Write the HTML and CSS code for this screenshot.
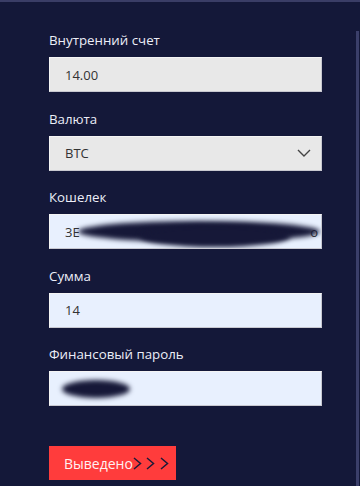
FILE: index.html
```html
<!DOCTYPE html>
<html lang="ru">
<head>
<meta charset="utf-8">
<link rel="stylesheet" href="styles.css">
</head>
<body>
<div class="panel">
  <div class="scrollbar"></div>
  <form class="form">
    <div class="field">
      <div class="label">Внутренний счет</div>
      <div class="input grey">14.00</div>
    </div>
    <div class="field">
      <div class="label">Валюта</div>
      <div class="input grey select">
        <span>BTC</span>
        <svg class="chev" width="14" height="8" viewBox="0 0 14 8"><path d="M1 1 L7 7 L13 1" fill="none" stroke="#444" stroke-width="1.4"/></svg>
      </div>
    </div>
    <div class="field">
      <div class="label">Кошелек</div>
      <div class="input blue wallet">
        <span>3E</span><span class="tail">o</span>
        <div class="blob blob-a"></div>
        <div class="blob blob-b"></div>
      </div>
    </div>
    <div class="field">
      <div class="label">Сумма</div>
      <div class="input blue">14</div>
    </div>
    <div class="field">
      <div class="label">Финансовый пароль</div>
      <div class="input blue pass">
        <div class="blob blob-c"></div>
      </div>
    </div>
    <button type="button" class="submit">
      <span>Выведено</span>
      <svg class="arrows" width="36" height="13" viewBox="0 0 36 13"><path d="M1 1 L7.5 6.5 L1 12 M14 1 L20.5 6.5 L14 12 M28 1 L34.5 6.5 L28 12" fill="none" stroke="#1c1a38" stroke-width="1.5"/></svg>
    </button>
  </form>
</div>
</body>
</html>
```
FILE: styles.css
```css
html, body {
  margin: 0;
  padding: 0;
  background: #141839;
}
body {
  font-family: "Open Sans", "Liberation Sans", sans-serif;
  width: 360px;
  height: 486px;
  overflow: hidden;
}
.panel {
  position: relative;
  height: 486px;
  box-sizing: border-box;
  border-top: 2px solid #3a3d66;
}
.scrollbar {
  position: absolute;
  right: 1px;
  top: 29px;
  bottom: 0;
  width: 3px;
  background: #3b3f6a;
}
.form {
  padding: 29px 0 0 49px;
  display: flex;
  flex-direction: column;
}
.field {
  display: flex;
  flex-direction: column;
  gap: 8px;
  margin-bottom: 17.5px;
}
.label {
  color: #eceef8;
  font-size: 13.3px;
  line-height: 18px;
  height: 18px;
}
.input {
  position: relative;
  box-sizing: border-box;
  width: 273px;
  height: 35px;
  padding: 0 15px;
  display: flex;
  align-items: center;
  font-size: 13px;
  color: #333;
  border: 1px solid #f4f4f4;
  border-right-color: #c8c8d0;
  border-bottom-color: #c8c8d0;
  overflow: hidden;
}
.grey {
  background: #e8e8e8;
}
.blue {
  background: #e8f0fe;
}
.select {
  justify-content: space-between;
  padding-right: 10px;
}
.wallet {
  justify-content: space-between;
  padding-right: 3px;
}
.blob {
  position: absolute;
  background: #161838;
  border-radius: 50%;
  filter: blur(2.5px);
}
.blob-a {
  left: 28px;
  top: 6px;
  width: 242px;
  height: 21px;
}
.blob-b {
  left: 90px;
  top: 10px;
  width: 150px;
  height: 22px;
}
.blob-c {
  left: 12px;
  top: 8px;
  width: 68px;
  height: 18px;
}
.submit {
  margin-top: 22.5px;
  width: 127px;
  height: 34px;
  border: none;
  background: #ff3c3c;
  display: flex;
  align-items: center;
  padding: 0 0 0 15px;
  font-family: "Open Sans", "Liberation Sans", sans-serif;
  font-size: 14px;
  color: #fff0f2;
  cursor: pointer;
}
.arrows {
  margin-left: 0;
}
```
